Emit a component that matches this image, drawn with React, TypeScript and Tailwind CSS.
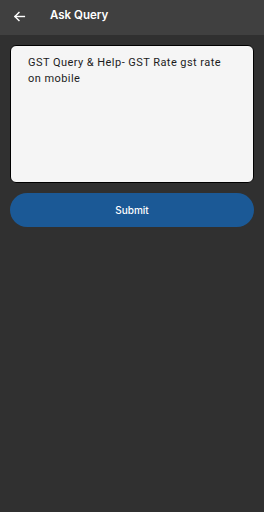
import React from "react";

export default function App() {
  return (
    <div className="w-[264px] h-[512px] bg-[#303030] flex flex-col" style={{ fontFamily: "Inter, 'Noto Sans', sans-serif" }}>
      <div className="h-[35px] bg-[#404040] flex items-center shrink-0 pb-[3px]">
        <div className="w-[50px] flex items-center pl-[13px]">
          <svg width="13" height="13" viewBox="0 0 24 24" fill="none" stroke="white" strokeWidth="2.6" strokeLinecap="square">
            <path d="M21 12H4" />
            <path d="M11 4.5L3.5 12L11 19.5" />
          </svg>
        </div>
        <span className="text-white text-[11.5px] font-semibold">Ask Query</span>
      </div>
      <div className="px-[10px] pt-[10px] flex flex-col gap-[10px]">
        <div className="h-[138px] bg-[#f5f5f5] border border-black rounded-[6px] pl-[17px] pr-[22px] pt-[9px]">
          <p className="text-[11px] leading-[16px] text-[#1c1c1c] tracking-[0.45px]" style={{ fontFamily: "Roboto, sans-serif" }}>GST Query &amp; Help- GST Rate gst rate on mobile</p>
        </div>
        <button className="h-[34px] rounded-full bg-[#1b5996] text-white text-[10px] font-medium flex items-center justify-center">Submit</button>
      </div>
    </div>
  );
}
